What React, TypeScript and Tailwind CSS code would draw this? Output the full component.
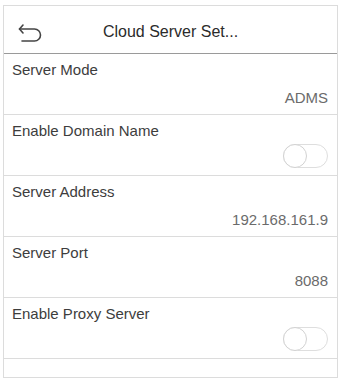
const rows: { label: string; value?: string; toggle?: boolean }[] = [
  { label: "Server Mode", value: "ADMS" },
  { label: "Enable Domain Name", toggle: true },
  { label: "Server Address", value: "192.168.161.9" },
  { label: "Server Port", value: "8088" },
  { label: "Enable Proxy Server", toggle: true },
];

const BackIcon = () => (
  <svg width="24" height="20" viewBox="0 0 24 20" fill="none" stroke="#444" strokeWidth="1.6" strokeLinecap="round" strokeLinejoin="round">
    <path d="M5 2 1.5 6 5 10" />
    <path d="M1.5 6H16.5a6 6 0 0 1 0 12H4" />
  </svg>
);

const Toggle = () => (
  <div className="flex items-center w-[45px] h-[24px] rounded-full border border-[#dedede] bg-white">
    <div className="w-[24px] h-[24px] -ml-px rounded-full border border-[#d2d2d2] bg-white" />
  </div>
);

export default function App() {
  return (
    <div
      className="w-[343px] h-[386px] bg-white pt-[5px] pl-[3px]"
      style={{ fontFamily: '"Liberation Sans", Arial, sans-serif' }}
    >
      <div className="w-[335px] h-[373px] border border-[#dcdcdc] flex flex-col">
        <div className="grid grid-cols-[48px_1fr_48px] items-center h-[48px] pt-[5px] border-b border-[#9a9a9a]">
          <div className="pl-[14px] pt-[1px]">
            <BackIcon />
          </div>
          <div className="text-center text-[16px] text-[#2b2b2b]">Cloud Server Set...</div>
          <div />
        </div>
        {rows.map((r) => (
          <div key={r.label} className="h-[61px] border-b border-[#dcdcdc] flex flex-col pl-[8px] pr-[9px]">
            <div className="pt-[7px] text-[15px] leading-[18px] text-[#3d3d3d]">{r.label}</div>
            {r.value && (
              <div className="mt-[10px] text-right text-[15px] leading-[18px] text-[#6b6b6b]">{r.value}</div>
            )}
            {r.toggle && (
              <div className="mt-[4px] flex justify-end">
                <Toggle />
              </div>
            )}
          </div>
        ))}
      </div>
    </div>
  );
}
